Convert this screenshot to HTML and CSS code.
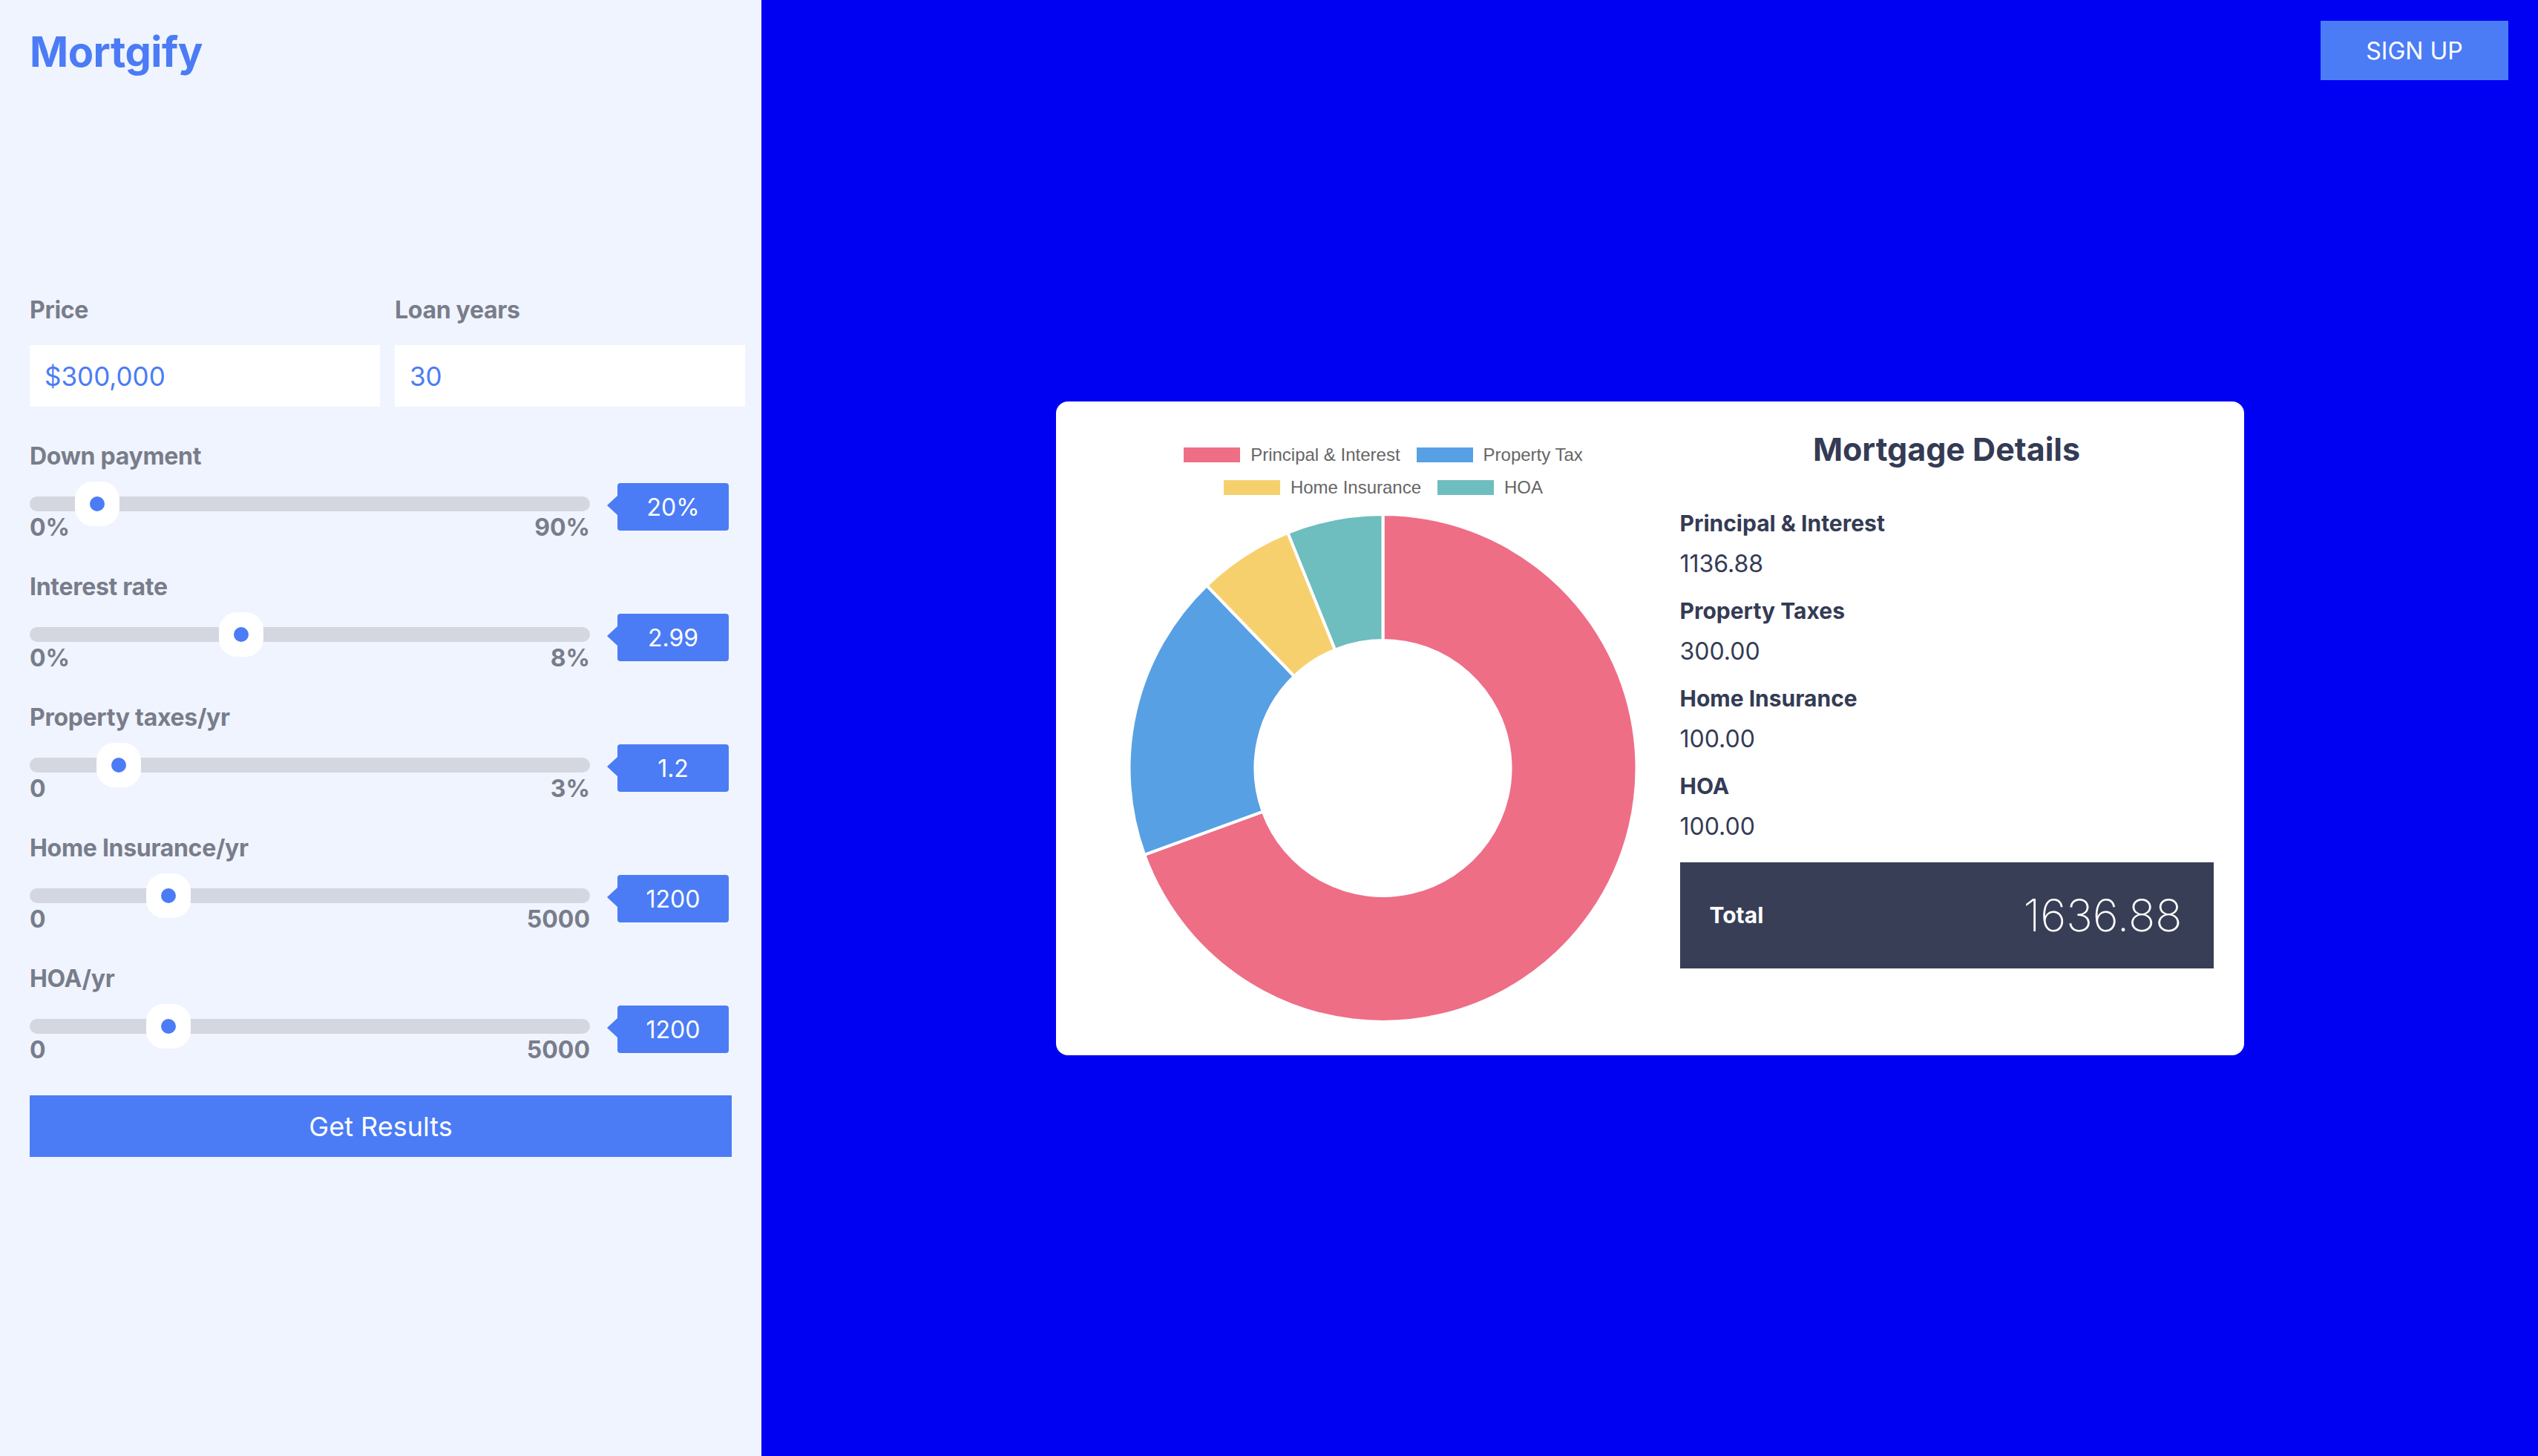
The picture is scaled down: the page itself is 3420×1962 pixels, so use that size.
FILE: index.html
```html
<!DOCTYPE html>
<html lang="en">
<head>
<meta charset="utf-8">
<title>Mortgify</title>
<link rel="stylesheet" href="styles.css">
</head>
<body>
<div class="app">
  <aside class="sidebar">
    <h1 class="logo">Mortgify</h1>
    <form class="form">
      <div class="inputs">
        <label class="input-field">
          <span class="label">Price</span>
          <input class="text-input" type="text" value="$300,000">
        </label>
        <label class="input-field">
          <span class="label">Loan years</span>
          <input class="text-input" type="text" value="30">
        </label>
      </div>

      <div class="slider-field first">
        <div class="label">Down payment</div>
        <div class="slider-row">
          <div class="slider">
            <div class="track"><span class="thumb" style="left:12.05%"></span></div>
            <div class="range-labels"><span>0%</span><span>90%</span></div>
          </div>
          <output class="badge">20%</output>
        </div>
      </div>

      <div class="slider-field">
        <div class="label">Interest rate</div>
        <div class="slider-row">
          <div class="slider">
            <div class="track"><span class="thumb" style="left:37.7%"></span></div>
            <div class="range-labels"><span>0%</span><span>8%</span></div>
          </div>
          <output class="badge">2.99</output>
        </div>
      </div>

      <div class="slider-field">
        <div class="label">Property taxes/yr</div>
        <div class="slider-row">
          <div class="slider">
            <div class="track"><span class="thumb" style="left:15.9%"></span></div>
            <div class="range-labels"><span>0</span><span>3%</span></div>
          </div>
          <output class="badge">1.2</output>
        </div>
      </div>

      <div class="slider-field">
        <div class="label">Home Insurance/yr</div>
        <div class="slider-row">
          <div class="slider">
            <div class="track"><span class="thumb" style="left:24.73%"></span></div>
            <div class="range-labels"><span>0</span><span>5000</span></div>
          </div>
          <output class="badge">1200</output>
        </div>
      </div>

      <div class="slider-field">
        <div class="label">HOA/yr</div>
        <div class="slider-row">
          <div class="slider">
            <div class="track"><span class="thumb" style="left:24.73%"></span></div>
            <div class="range-labels"><span>0</span><span>5000</span></div>
          </div>
          <output class="badge">1200</output>
        </div>
      </div>

      <button class="results-btn" type="button">Get Results</button>
    </form>
  </aside>

  <main class="main">
    <button class="signup" type="button">SIGN UP</button>
    <section class="card">
      <div class="chart">
        <div class="legend">
          <div class="legend-row">
            <div class="legend-item"><span class="swatch pink"></span><span>Principal &amp; Interest</span></div>
            <div class="legend-item"><span class="swatch blue"></span><span>Property Tax</span></div>
          </div>
          <div class="legend-row">
            <div class="legend-item"><span class="swatch yellow"></span><span>Home Insurance</span></div>
            <div class="legend-item"><span class="swatch teal"></span><span>HOA</span></div>
          </div>
        </div>
        <svg class="donut" width="801" height="701" viewBox="0 0 801 701" xmlns="http://www.w3.org/2000/svg">
          <g stroke="#ffffff" stroke-width="4" stroke-linejoin="round">
            <path fill="#ee6e86" d="M 400.5 12 A 342 342 0 1 1 79.06 470.80 L 238.84 412.74 A 172 172 0 1 0 400.5 182 Z"/>
            <path fill="#58a0e4" d="M 79.06 470.80 A 342 342 0 0 1 162.97 107.94 L 281.04 230.25 A 172 172 0 0 0 238.84 412.74 Z"/>
            <path fill="#f7d06e" d="M 162.97 107.94 A 342 342 0 0 1 272.37 36.91 L 336.06 194.53 A 172 172 0 0 0 281.04 230.25 Z"/>
            <path fill="#6ebdbf" d="M 272.37 36.91 A 342 342 0 0 1 400.5 12 L 400.5 182 A 172 172 0 0 0 336.06 194.53 Z"/>
          </g>
        </svg>
      </div>
      <div class="details">
        <h2 class="details-title">Mortgage Details</h2>
        <dl class="breakdown">
          <dt>Principal &amp; Interest</dt>
          <dd>1136.88</dd>
          <dt>Property Taxes</dt>
          <dd>300.00</dd>
          <dt>Home Insurance</dt>
          <dd>100.00</dd>
          <dt>HOA</dt>
          <dd>100.00</dd>
        </dl>
        <div class="total">
          <span class="total-label">Total</span>
          <span class="total-value">1636.88</span>
        </div>
      </div>
    </section>
  </main>
</div>
</body>
</html>
```

FILE: styles.css
```css
* {
  box-sizing: border-box;
}

html, body {
  margin: 0;
  padding: 0;
}

body {
  font-family: Inter, "Noto Sans", sans-serif;
  width: 3420px;
  height: 1962px;
  overflow: hidden;
}

.app {
  display: grid;
  grid-template-columns: 1026px 1fr;
  height: 1962px;
}

/* ---------- Sidebar ---------- */
.sidebar {
  background: #f0f4fe;
  padding: 36px 40px 0 40px;
}

.logo {
  margin: 0;
  font-size: 56px;
  line-height: 68px;
  font-weight: 700;
  color: #4b7cf5;
  letter-spacing: -0.5px;
}

.form {
  margin-top: 294px;
}

.inputs {
  display: grid;
  grid-template-columns: 472px 472px;
  column-gap: 20px;
}

.input-field {
  display: block;
}

.label {
  display: block;
  font-size: 32px;
  line-height: 40px;
  font-weight: 700;
  color: #787d8b;
  letter-spacing: -0.3px;
}

.text-input {
  display: block;
  width: 100%;
  height: 83px;
  margin-top: 27px;
  border: 0;
  border-radius: 0;
  outline: none;
  background: #ffffff;
  padding: 0 20px;
  font-family: Inter, "Noto Sans", sans-serif;
  font-size: 35px;
  color: #4b7cf5;
}

.slider-field {
  margin-top: 42px;
}

.slider-field.first {
  margin-top: 47px;
}

.slider-row {
  display: flex;
  align-items: flex-start;
  gap: 37px;
  margin-top: 14px;
}

.slider {
  flex: 0 0 755px;
  padding-top: 20px;
}

.track {
  position: relative;
  height: 20px;
  border-radius: 10px;
  background: #d4d7df;
}

.thumb {
  position: absolute;
  top: -20px;
  width: 60px;
  height: 60px;
  margin-left: -30px;
  background: #ffffff;
  border-radius: 24px;
}

.thumb::after {
  content: "";
  position: absolute;
  left: 20px;
  top: 20px;
  width: 20px;
  height: 20px;
  border-radius: 50%;
  background: #4b7cf5;
}

.range-labels {
  display: flex;
  justify-content: space-between;
  margin-top: 4px;
  font-size: 32px;
  line-height: 36px;
  font-weight: 700;
  color: #787d8b;
}

.badge {
  position: relative;
  flex: 0 0 150px;
  height: 64px;
  margin-top: 2px;
  display: flex;
  align-items: center;
  justify-content: center;
  background: #4b7cf5;
  border-radius: 4px;
  color: #ffffff;
  font-size: 32px;
}

.badge::before {
  content: "";
  position: absolute;
  left: -14px;
  top: 17px;
  border-right: 14px solid #4b7cf5;
  border-top: 13px solid transparent;
  border-bottom: 13px solid transparent;
}

.results-btn {
  display: block;
  width: 100%;
  height: 83px;
  margin-top: 43px;
  border: 0;
  border-radius: 0;
  background: #4b7cf5;
  color: #ffffff;
  font-family: Inter, "Noto Sans", sans-serif;
  font-size: 36px;
  cursor: pointer;
}

/* ---------- Main ---------- */
.main {
  position: relative;
  background: #0000f2;
  display: flex;
  align-items: center;
  justify-content: center;
}

.signup {
  position: absolute;
  top: 28px;
  right: 40px;
  width: 253px;
  height: 80px;
  border: 0;
  background: #4b7cf5;
  color: #ffffff;
  font-family: Inter, "Noto Sans", sans-serif;
  font-size: 32px;
  cursor: pointer;
}

.card {
  display: flex;
  align-items: flex-start;
  padding: 40px 41px 40px 40px;
  background: #ffffff;
  border-radius: 16px;
}

.chart {
  flex: 0 0 801px;
  width: 801px;
}

.legend {
  height: 100px;
  padding-top: 20px;
  display: flex;
  flex-direction: column;
  gap: 20px;
}

.legend-row {
  display: flex;
  justify-content: center;
  gap: 20px;
  height: 24px;
}

.legend-item {
  display: flex;
  align-items: center;
  font-family: "Liberation Sans", Arial, sans-serif;
  font-size: 24px;
  line-height: 24px;
  color: #666666;
}

.swatch {
  width: 76px;
  height: 20px;
  margin: 2px 14px 2px 2px;
}

.swatch.pink { background: #ee6e86; }
.swatch.blue { background: #58a0e4; }
.swatch.yellow { background: #f7d06e; }
.swatch.teal { background: #6ebdbf; }

.donut {
  display: block;
}

.details {
  flex: 0 0 719px;
  width: 719px;
  color: #343b54;
}

.details-title {
  margin: 0;
  font-size: 43px;
  line-height: 48px;
  font-weight: 700;
  text-align: center;
}

.breakdown {
  margin: 56px 0 0 0;
}

.breakdown dt {
  font-size: 30px;
  line-height: 40px;
  font-weight: 700;
  margin-top: 23px;
}

.breakdown dt:first-child {
  margin-top: 0;
}

.breakdown dd {
  margin: 15px 0 0 0;
  font-size: 32px;
  line-height: 40px;
}

.total {
  margin-top: 28px;
  height: 143px;
  padding: 0 42px 0 40px;
  display: flex;
  align-items: center;
  justify-content: space-between;
  background: #383e56;
  color: #ffffff;
}

.total-label {
  font-size: 30px;
  font-weight: 700;
}

.total-value {
  font-size: 60px;
  font-weight: 200;
}
```
